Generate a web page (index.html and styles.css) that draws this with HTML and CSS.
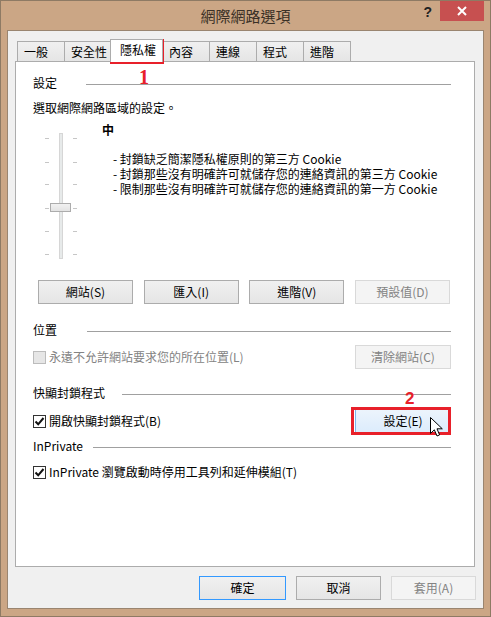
FILE: index.html
```html
<!DOCTYPE html>
<html lang="zh-Hant">
<head>
<meta charset="UTF-8">
<meta name="viewport" content="width=device-width, initial-scale=1.0">
<title>網際網路選項</title>
<link rel="stylesheet" href="styles.css">
</head>
<body>
<div class="window">
    <div class="titlebar">
        <span></span>
        <span class="title">網際網路選項</span>
        <div class="title-buttons">
            <span class="help">?</span>
            <span class="close">
                <svg width="10" height="10" viewBox="0 0 10 10"><path d="M1 1 L9 9 M9 1 L1 9" stroke="#fff" stroke-width="2"/></svg>
            </span>
        </div>
    </div>
    <div class="client">
        <div class="tabs">
            <div class="tab">一般</div>
            <div class="tab">安全性</div>
            <div class="tab active">隱私權</div>
            <div class="tab">內容</div>
            <div class="tab">連線</div>
            <div class="tab">程式</div>
            <div class="tab">進階</div>
        </div>
        <div class="panel">
            <div class="group-title">
                <span class="label label-settings">設定</span>
                <span class="rule"></span>
            </div>
            <p class="desc">選取網際網路區域的設定。</p>
            <div class="level">
                <svg class="slider" width="60" height="140" viewBox="0 0 60 140">
                    <g fill="#c6c6c6">
                        <rect x="12" y="16" width="4" height="1"/><rect x="40" y="16" width="4" height="1"/>
                        <rect x="12" y="40" width="4" height="1"/><rect x="40" y="40" width="4" height="1"/>
                        <rect x="12" y="62" width="4" height="1"/><rect x="40" y="62" width="4" height="1"/>
                        <rect x="12" y="86" width="4" height="1"/><rect x="40" y="86" width="4" height="1"/>
                        <rect x="12" y="109" width="4" height="1"/><rect x="40" y="109" width="4" height="1"/>
                        <rect x="12" y="132" width="4" height="1"/><rect x="40" y="132" width="4" height="1"/>
                    </g>
                    <rect x="26.5" y="11.5" width="3" height="125" fill="#e7eaea" stroke="#d6d6d6"/>
                    <defs>
                        <linearGradient id="thumb" x1="0" y1="0" x2="0" y2="1">
                            <stop offset="0" stop-color="#f2f2f2"/>
                            <stop offset="1" stop-color="#e2e2e2"/>
                        </linearGradient>
                    </defs>
                    <rect x="17.5" y="81.5" width="20" height="8" fill="url(#thumb)" stroke="#acacac"/>
                </svg>
                <div class="level-text">
                    <div class="level-name">中</div>
                    <ul class="rules-list">
                        <li>- 封鎖缺乏簡潔隱私權原則的第三方 Cookie</li>
                        <li>- 封鎖那些沒有明確許可就儲存您的連絡資訊的第三方 Cookie</li>
                        <li>- 限制那些沒有明確許可就儲存您的連絡資訊的第一方 Cookie</li>
                    </ul>
                </div>
            </div>
            <div class="level-buttons">
                <button class="btn">網站(S)</button>
                <button class="btn">匯入(I)</button>
                <button class="btn">進階(V)</button>
                <button class="btn disabled">預設值(D)</button>
            </div>

            <div class="group-title gap-location">
                <span class="label label-location">位置</span>
                <span class="rule"></span>
            </div>
            <div class="option-row row-location">
                <label class="check disabled"><span class="box"></span>永遠不允許網站要求您的所在位置(L)</label>
                <button class="btn disabled">清除網站(C)</button>
            </div>

            <div class="group-title gap-popup">
                <span class="label label-popup">快顯封鎖程式</span>
                <span class="rule"></span>
            </div>
            <div class="option-row row-popup">
                <label class="check"><span class="box"><svg width="11" height="11" viewBox="0 0 11 11"><path d="M1.5 5.5 L4.2 8.3 L9.5 2" fill="none" stroke="#111" stroke-width="2"/></svg></span>開啟快顯封鎖程式(B)</label>
                <button class="btn hover">設定(E)</button>
            </div>

            <div class="group-title gap-inprivate">
                <span class="label label-inprivate">InPrivate</span>
                <span class="rule"></span>
            </div>
            <div class="option-row row-inprivate">
                <label class="check"><span class="box"><svg width="11" height="11" viewBox="0 0 11 11"><path d="M1.5 5.5 L4.2 8.3 L9.5 2" fill="none" stroke="#111" stroke-width="2"/></svg></span>InPrivate 瀏覽啟動時停用工具列和延伸模組(T)</label>
            </div>
        </div>
        <div class="dialog-buttons">
            <button class="btn default">確定</button>
            <button class="btn">取消</button>
            <button class="btn disabled">套用(A)</button>
        </div>
    </div>

    <!-- annotations drawn over the dialog -->
    <div class="mark mark-tab"></div>
    <span class="num num-1">1</span>
    <div class="mark mark-btn"></div>
    <span class="num num-2">2</span>
    <svg class="cursor" width="14" height="22" viewBox="0 0 14 22">
        <path d="M0.5 0.5 L0.5 16.5 L4.3 12.8 L7 19 L9.6 17.9 L7 11.8 L12.3 11.8 Z" fill="#fff" stroke="#000" stroke-linejoin="round"/>
    </svg>
</div>
</body>
</html>
```

FILE: styles.css
```css
* {
    box-sizing: border-box;
}
body {
    margin: 0;
    font-family: "Noto Sans CJK TC", sans-serif;
    font-size: 12px;
    color: #000;
    background: #cba685;
}
.window {
    position: relative;
    width: 491px;
    height: 617px;
    padding: 0 6px 7px;
    background: #cba685;
    border: 1px solid #8e7a64;
}
.titlebar {
    display: grid;
    grid-template-columns: 1fr auto 1fr;
    height: 29px;
}
.title {
    align-self: center;
    font-size: 15px;
    line-height: 20px;
    padding-top: 1px;
    color: #3a3026;
}
.title-buttons {
    display: flex;
    justify-content: flex-end;
    align-items: flex-start;
}
.help {
    margin: 3px 8px 0 0;
    font: bold 14px/16px "Liberation Sans", sans-serif;
    color: #222;
}
.close {
    width: 44px;
    height: 20px;
    background: #c75050;
    display: flex;
    align-items: center;
    justify-content: center;
}
.client {
    height: 579px;
    border: 1px solid #9a8570;
    background: #f0f0f0;
}

/* tab strip */
.tabs {
    display: flex;
    align-items: flex-end;
    height: 30px;
    padding: 8px 0 0 9px;
}
.tab {
    width: 48px;
    height: 20px;
    margin-left: -1px;
    padding: 2px 0 0 6px;
    border: 1px solid #acacac;
    border-bottom: 0;
    background: linear-gradient(#f0f0f0, #e5e5e5);
    line-height: 16px;
    white-space: nowrap;
}
.tab:first-child {
    margin-left: 0;
}
.tab.active {
    position: relative;
    z-index: 1;
    width: 53px;
    height: 23px;
    margin: 0 0 -1px -2px;
    padding-left: 9px;
    background: #fff;
}

/* panel */
.panel {
    width: 460px;
    height: 506px;
    margin-left: 7px;
    padding: 13px 23px 0 17px;
    background: #fff;
    border: 1px solid #acacac;
}
.group-title {
    display: flex;
    align-items: center;
    height: 16px;
    line-height: 16px;
}
.rule {
    flex: 1;
    height: 1px;
    margin-top: 2px;
    background: #a0a0a0;
}
.label-settings { width: 53px; }
.label-location { width: 54px; }
.label-popup { width: 89px; }
.label-inprivate { width: 60px; }

.desc {
    margin: 9px 0 0;
    line-height: 16px;
}
.level {
    display: flex;
    height: 140px;
    margin-top: 6px;
}
.level-text {
    padding-left: 9px;
}
.level-name {
    line-height: 16px;
    font-weight: bold;
}
.rules-list {
    list-style: none;
    margin: 13px 0 0 11px;
    padding: 0;
    line-height: 15px;
    white-space: nowrap;
}
.level-buttons {
    display: flex;
    justify-content: space-between;
    margin: 18px 1px 0 5px;
}
.level-buttons .btn {
    width: 95px;
}

.btn {
    height: 24px;
    padding: 0;
    border: 1px solid #acacac;
    background: linear-gradient(#f0f0f0, #e5e5e5);
    font: 12px/22px "Noto Sans CJK TC", sans-serif;
    color: #000;
    text-align: center;
}
.btn.disabled {
    background: #f4f4f4;
    border-color: #d9d9d9;
    color: #838383;
}
.btn.hover {
    background: linear-gradient(#ecf4fc, #dcecfc);
    border-color: #7eb4ea;
}
.btn.default {
    border-color: #3399ff;
}

.option-row {
    display: flex;
    align-items: center;
    justify-content: space-between;
    height: 24px;
}
.option-row .btn {
    width: 96px;
}
.gap-location { margin-top: 18px; }
.row-location { margin-top: 7px; }
.gap-popup { margin-top: 16px; }
.row-popup { margin-top: 8px; }
.gap-inprivate { margin-top: 5px; }
.row-inprivate {
    margin-top: 10px;
    height: 16px;
}

.check {
    display: flex;
    align-items: center;
    line-height: 16px;
}
.check .box {
    display: flex;
    align-items: center;
    justify-content: center;
    width: 13px;
    height: 13px;
    margin: 1px 3px 0 0;
    border: 1px solid #333;
    background: #fff;
}
.check.disabled {
    color: #838383;
}
.check.disabled .box {
    border-color: #bcbcbc;
    background: #e6e6e6;
}

.dialog-buttons {
    display: flex;
    justify-content: flex-end;
    gap: 10px;
    margin-top: 9px;
    padding-right: 7px;
}
.dialog-buttons .btn {
    width: 85px;
}
.dialog-buttons .default {
    width: 87px;
}

/* red annotations */
.mark {
    position: absolute;
    border: 3px solid #e8202a;
}
.mark-tab {
    left: 109px;
    top: 38px;
    width: 54px;
    height: 25px;
}
.mark-btn {
    left: 350px;
    top: 406px;
    width: 100px;
    height: 28px;
}
.num {
    position: absolute;
    color: #e8202a;
}
.num-1 {
    left: 138px;
    top: 66px;
    font: 20px/20px "Liberation Serif", serif;
    font-weight: bold;
}
.num-2 {
    left: 404px;
    top: 389px;
    font: 17px/17px "Liberation Sans", sans-serif;
    font-weight: bold;
}
.cursor {
    position: absolute;
    left: 429px;
    top: 416px;
}
```
